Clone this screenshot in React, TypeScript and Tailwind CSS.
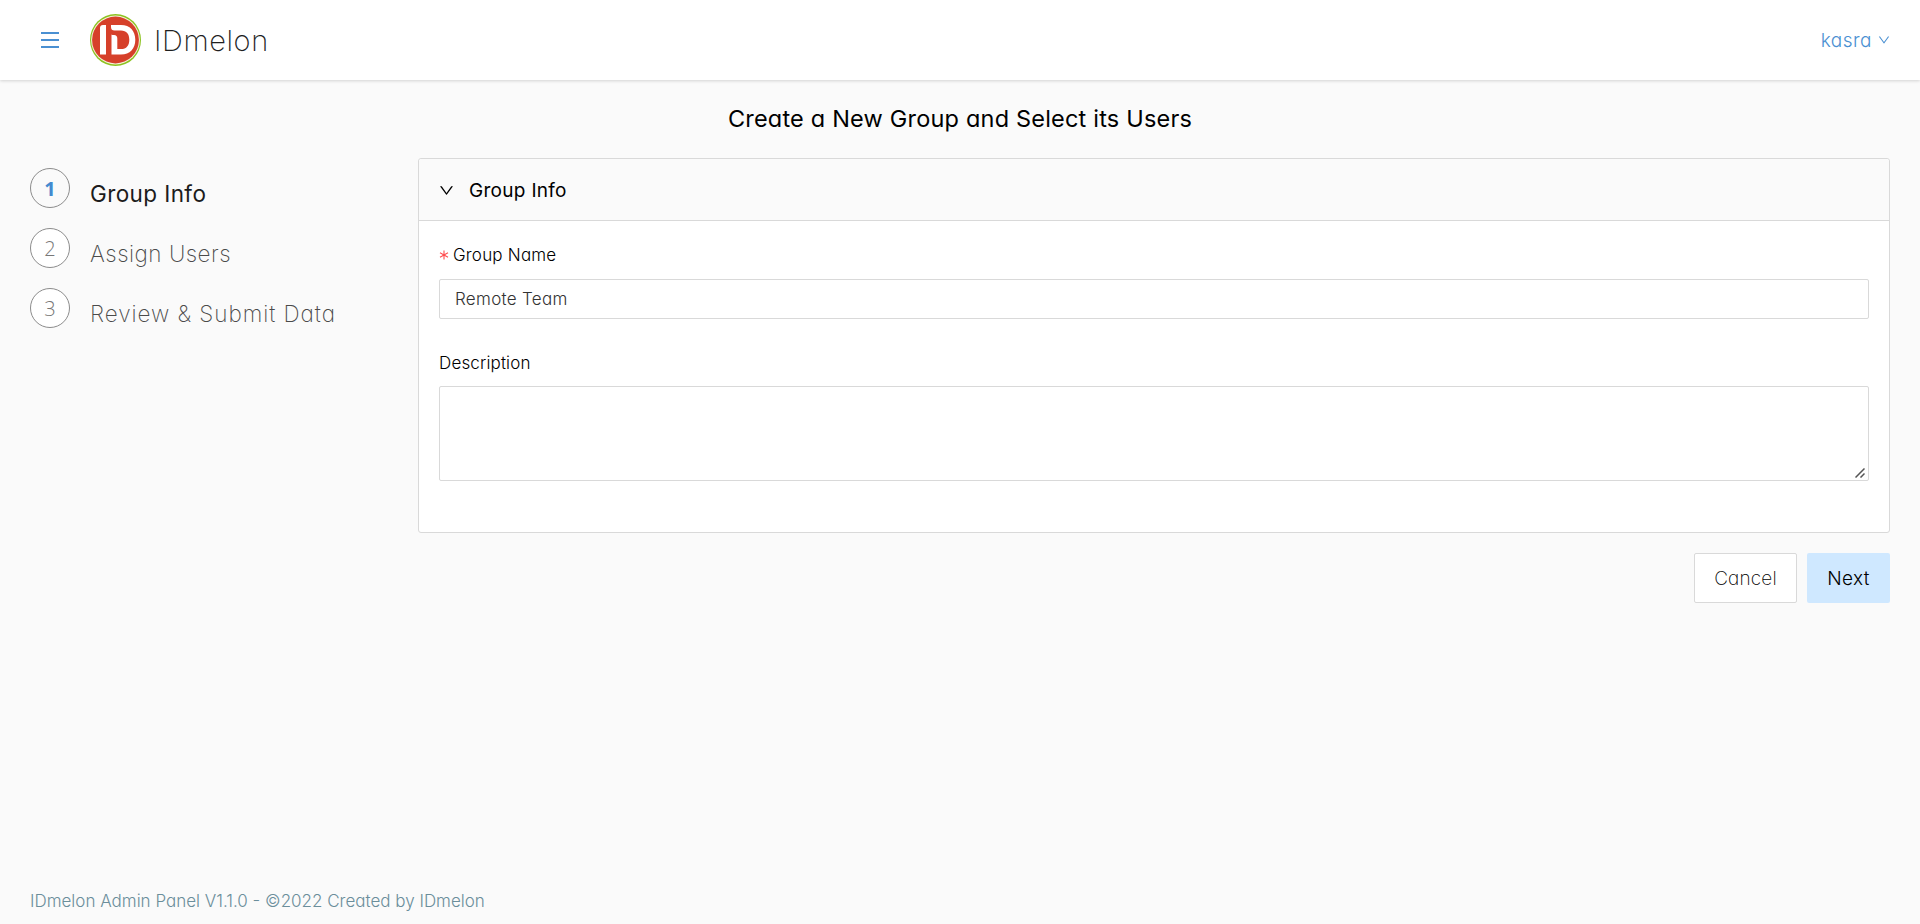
import React from 'react';

function Logo() {
  return (
    <svg width="51" height="52" viewBox="0 0 51 52" className="shrink-0">
      <ellipse cx="25.500" cy="26" rx="25.500" ry="26" fill="#8cc220" />
      <circle cx="25.500" cy="26" r="24.4" fill="#f6f0d8" />
      <circle cx="25.500" cy="26" r="23.4" fill="#d6402a" />
      <path d="M10 14Q10 11 13 11H16V40.500H10Z" fill="#fff" />
      <path d="M21 11H31C40 11 45.300 17 45.300 25.700C45.300 34.500 40 40.500 31 40.500H21.500V20.500Q22 21 24 21Q27.300 21 27.300 24.500V35H31C36.500 35 39.300 31.500 39.300 25.700C39.300 20 36.500 16.500 31 16.500H24.500Q21 16.500 21 13Z" fill="#fff" />
    </svg>
  );
}

function Chevron({ size }: { size: number }) {
  return (
    <svg width={size} height={size} viewBox="64 64 896 896" fill="currentColor" className="shrink-0">
      <path d="M884 256h-75c-5.100 0-9.900 2.500-12.900 6.600L512 654.200 227.900 262.600c-3-4.100-7.800-6.600-12.900-6.600h-75c-6.500 0-10.300 7.400-6.500 12.700l352.600 486.100c12.800 17.600 39 17.600 51.700 0l352.600-486.100c3.900-5.300.1-12.700-6.400-12.700z" />
    </svg>
  );
}

const steps = [
  { title: 'Group Info', style: 'font-[430] tracking-[0.4px] text-[#1c1c1c]' },
  { title: 'Assign Users', style: 'font-[250] tracking-[0.5px] text-[#4a4a4a]' },
  { title: 'Review & Submit Data', style: 'font-[250] tracking-[0.95px] text-[#4a4a4a]' },
];

function Steps() {
  return (
    <ol className="flex w-[388px] shrink-0 flex-col gap-5 pt-[10px]">
      {steps.map((step, i) => (
        <li key={step.title} className="flex h-10 gap-5">
          <span
            className={
              i === 0
                ? 'flex size-10 items-center justify-center rounded-full border border-[#8c8c8c] pt-0.5 font-["Open_Sans",sans-serif] text-[20px] font-bold text-[#448acf]'
                : 'flex size-10 items-center justify-center rounded-full border border-[#8c8c8c] bg-white pt-0.5 font-["Open_Sans",sans-serif] text-[20px] font-light text-[#777]'
            }
          >
            {i + 1}
          </span>
          <span className={`pt-[6px] text-[22.5px] leading-10 ${step.style}`}>{step.title}</span>
        </li>
      ))}
    </ol>
  );
}

export default function App() {
  return (
    <div className="flex h-[924px] w-full flex-col bg-[#fafafa] font-[Inter,sans-serif] text-black [font-feature-settings:'cv11']">
      <header className="z-10 flex h-20 shrink-0 items-center bg-white pr-[30px] pl-[41px] shadow-[0_1px_3px_rgba(0,0,0,0.16)]">
        <button aria-label="Menu" className="flex h-4 w-[18px] flex-col justify-between">
          <i className="h-0.5 w-full bg-[#4a90d2]" />
          <i className="h-0.5 w-full bg-[#4a90d2]" />
          <i className="h-0.5 w-full bg-[#4a90d2]" />
        </button>
        <div className="ml-[31px] flex items-center gap-[13px]">
          <Logo />
          <span className="pt-0.5 text-[29px] leading-10 font-[250] tracking-[0.6px] text-[#1f1f1f]">IDmelon</span>
        </div>
        <a className="ml-auto flex items-center gap-[6px] text-[#4a90d2]">
          <span className="pt-0.5 text-[19px] leading-7 font-[320] tracking-[0.5px]">kasra</span>
          <Chevron size={12} />
        </a>
      </header>

      <h1 className="mt-[23px] h-8 text-center text-[23.5px] leading-8 font-[430] tracking-[0.2px]">
        Create a New Group and Select its Users
      </h1>

      <main className="mt-[23px] flex px-[30px]">
        <Steps />
        <div className="flex grow flex-col">
          <section className="h-[375px] rounded-[3px] border border-[#d9d9d9] bg-white">
            <h2 className="flex h-[62px] items-center gap-[15px] rounded-t-[3px] border-b border-[#d9d9d9] bg-[#fafafa] pt-0.5 pl-[20px]">
              <Chevron size={15} />
              <span className="text-[19px] leading-7 font-[430] tracking-[0.3px]">Group Info</span>
            </h2>
            <div className="flex flex-col px-5">
              <label className="mt-[21px] flex h-7 items-center text-[17px] font-light tracking-[0.2px]">
                <svg width="10" height="10" viewBox="0 0 10 10" stroke="#ff4d4f" strokeWidth="1.1" className="mr-1 mb-0.5">
                  <path d="M5 0.500V9.500M1 2.700L9 7.300M9 2.700L1 7.300" />
                </svg>
                Group Name
              </label>
              <input
                defaultValue="Remote Team"
                className="mt-[9px] h-10 rounded-[2px] border border-[#d9d9d9] bg-white px-[15px] text-[17px] font-light tracking-[0.3px] text-[#333] outline-none"
              />
              <label className="mt-[31px] flex h-7 items-center text-[17px] font-light tracking-[0.15px]">Description</label>
              <div className="relative mt-[8px] flex h-[95px]">
                <textarea className="grow resize-none rounded-[2px] border border-[#d9d9d9] bg-white outline-none" />
                <svg
                  width="10"
                  height="10"
                  viewBox="0 0 10 10"
                  stroke="#555"
                  strokeWidth="1.5"
                  className="pointer-events-none absolute right-[4px] bottom-[3px]"
                >
                  <path d="M0.500 9.500L9.500 0.500M5.500 9.500L9.500 5.500" />
                </svg>
              </div>
            </div>
          </section>
          <div className="mt-5 flex justify-end gap-[10px]">
            <button className="h-[50px] w-[103px] rounded-[2px] border border-[#d9d9d9] bg-white pt-0.5 text-[19px] font-[250] tracking-[0.15px] text-black">
              Cancel
            </button>
            <button className="h-[50px] w-[83px] rounded-[2px] bg-[#cfe8ff] pt-0.5 text-[19px] font-light tracking-[0.4px]">
              Next
            </button>
          </div>
        </div>
      </main>

      <footer className="mt-auto mb-[9px] px-[30px] text-[17px] leading-7 font-light text-[#6b8e9b]">
        IDmelon Admin Panel V1.1.0 - ©2022 Created by IDmelon
      </footer>
    </div>
  );
}
